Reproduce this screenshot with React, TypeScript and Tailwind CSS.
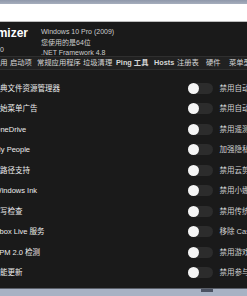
import React from 'react';

const font = { fontFamily: '"Liberation Sans", "Noto Sans CJK SC", sans-serif' };

const rows = [
  { left: '禁用经典文件资源管理器', right: '禁用自动播放' },
  { left: '禁用开始菜单广告', right: '禁用自动更新' },
  { left: '禁用 OneDrive', right: '禁用遥测服务' },
  { left: '禁用 My People', right: '加强隐私保护' },
  { left: '启用长路径支持', right: '禁用云剪贴板' },
  { left: '禁用 Windows Ink', right: '禁用小娜' },
  { left: '禁用拼写检查', right: '禁用传统启动' },
  { left: '禁用 Xbox Live 服务', right: '移除 Cast to Device' },
  { left: '禁用 TPM 2.0 检测', right: '禁用游戏栏' },
  { left: '禁用智能更新', right: '禁用参与计划' },
];

// widths include the space up to the next tab
const tabs = [
  { t: '通用', w: 'w-[17px]' },
  { t: '启动项', w: 'w-[27px]' },
  { t: '常规应用程序', w: 'w-[46px]' },
  { t: '垃圾清理', w: 'w-[33px]' },
  { t: 'Ping 工具', w: 'w-[38px] font-bold' },
  { t: 'Hosts', w: 'w-[23px] font-bold' },
  { t: '注册表', w: 'w-[29px]' },
  { t: '硬件', w: 'w-[23px]' },
  { t: '菜单型', w: 'w-[30px]' },
];

function Toggle() {
  return (
    <div className="w-[25px] h-[11px] rounded-full bg-[#2c2c2c] flex items-center">
      <div className="w-[11px] h-[11px] rounded-full bg-[#f4f4f4]" />
    </div>
  );
}

export default function App() {
  return (
    <div className="w-[247px] h-[296px] overflow-hidden flex flex-col bg-[#a8b2c4]" style={font}>
      <div className="h-[4px] bg-gradient-to-b from-[#8f98aa] to-[#a6aebd]" />
      <div className="h-[18px] bg-white border-b border-[#bdbdbd]" />

      <div className="h-[266px] bg-[#1a1a1a] flex flex-col overflow-hidden">
        {/* header */}
        <div className="h-[35px] flex border-b border-[#2f2f2f]">
          <div className="w-[41px] shrink-0 flex flex-col">
            <div className="w-[28px] flex justify-end mt-[3px]">
              <span className="text-[12px] leading-[16px] font-bold text-white whitespace-nowrap">Optimizer</span>
            </div>
            <div className="w-[4px] flex justify-end mt-[4px]">
              <span className="text-[7px] leading-[9px] text-[#cfcfcf] whitespace-nowrap">v16.0</span>
            </div>
          </div>
          <div className="flex flex-col pt-[5px] text-[7px] leading-[10.5px] text-[#cdcdcd] whitespace-nowrap">
            <span>Windows 10 Pro (2009)</span>
            <span>您使用的是64位</span>
            <span>.NET Framework 4.8</span>
          </div>
        </div>

        {/* tabs */}
        <div className="h-[13px] bg-[#212121] border-b border-[#2f2f2f] flex items-center -ml-[7px] whitespace-nowrap text-[7.3px] text-[#d6d6d6]">
          {tabs.map((t) => (
            <span key={t.t} className={`${t.w} shrink-0`}>
              {t.t}
            </span>
          ))}
        </div>

        {/* rows */}
        <div className="flex flex-col pt-[8px]">
          {rows.map((r) => (
            <div key={r.left} className="h-[20.5px] flex items-center whitespace-nowrap">
              <div className="w-[210px] shrink-0 -ml-[22.5px] text-[7.5px] text-[#ececec]">{r.left}</div>
              <div className="shrink-0">
                <Toggle />
              </div>
              <div className="ml-[7px] shrink-0 text-[7.5px] text-[#d2d2d2]">{r.right}</div>
            </div>
          ))}
        </div>
      </div>

      <div className="h-[1px] bg-[#5a5f69]" />
      <div className="flex-1 flex">
        <div className="ml-[201px] w-[12px] h-[3px] bg-[#4b5262]" />
      </div>
    </div>
  );
}
